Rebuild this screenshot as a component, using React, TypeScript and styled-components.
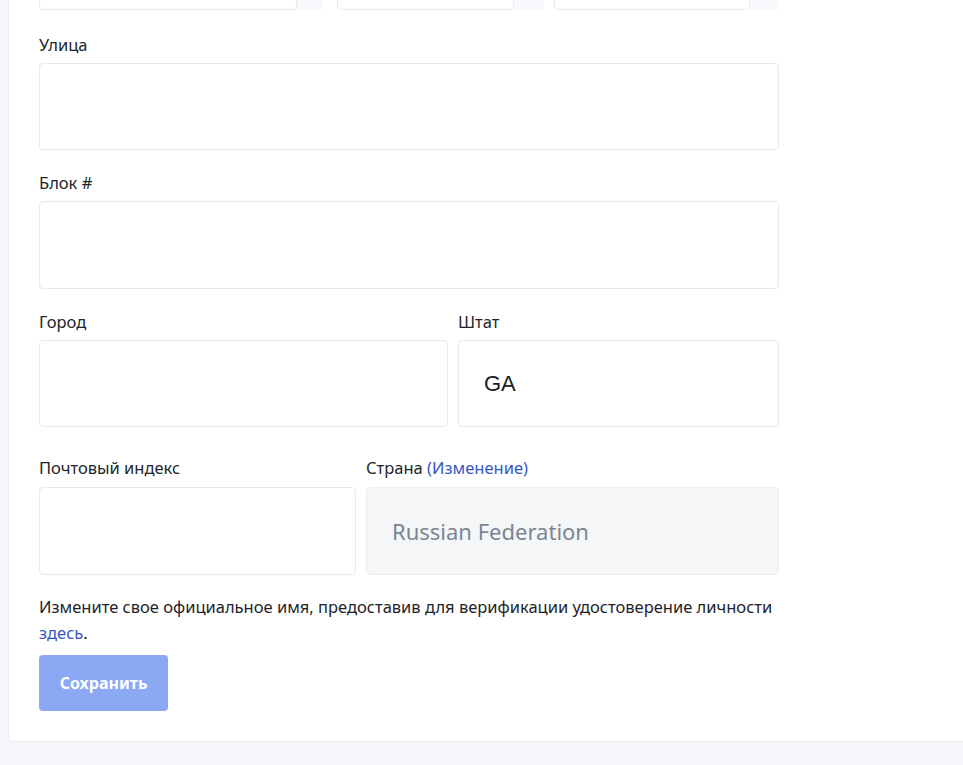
import React from "react";
import styled, { createGlobalStyle } from "styled-components";

const GlobalStyle = createGlobalStyle`
  html, body {
    margin: 0;
    padding: 0;
    background: #f4f6fb;
    overflow: hidden;
  }
  * { box-sizing: border-box; }
`;

const Page = styled.div`
  min-height: 765px;
  padding-left: 8px;
  font-family: "Noto Sans", "Open Sans", sans-serif;
  color: #1f2329;
`;

const Card = styled.div`
  background: #ffffff;
  border-left: 1px solid #e8ebf1;
  border-bottom: 1px solid #e8ebf1;
  border-radius: 0 0 0 6px;
  padding: 0 0 30px 30px;
  width: 970px;
`;

const Content = styled.div`
  width: 740px;
`;

const TopRow = styled.div`
  display: grid;
  grid-template-columns: 288px 207px 225px;
  gap: 10px;
  margin-top: -78px;
  height: 88px;
`;

const TopCell = styled.div`
  display: flex;
`;

const TopInput = styled.div<{ $w: number }>`
  width: ${(p) => p.$w}px;
  border: 1px solid #e6e9ee;
  border-radius: 4px;
  background: #fff;
`;

const TopAddon = styled.div<{ $w: number }>`
  width: ${(p) => p.$w}px;
  background: #f7f9fd;
`;

const Row = styled.div<{ $cols?: string; $top: number }>`
  display: grid;
  grid-template-columns: ${(p) => p.$cols ?? "1fr"};
  column-gap: 10px;
  margin-top: ${(p) => p.$top}px;
`;

const Field = styled.div`
  display: flex;
  flex-direction: column;
`;

const Label = styled.label<{ $gap?: number }>`
  font-size: 16.5px;
  line-height: 24px;
  color: #22262c;
  margin-bottom: ${(p) => p.$gap ?? 6}px;
`;

const ChangeLink = styled.a`
  color: #3557c2;
  text-decoration: none;
`;

const Box = styled.div<{ $h: number; $muted?: boolean }>`
  height: ${(p) => p.$h}px;
  border: 1px solid ${(p) => (p.$muted ? "#eceff2" : "#e6e9ee")};
  border-radius: 4px;
  background: ${(p) => (p.$muted ? "#f4f6f8" : "#ffffff")};
  display: flex;
  align-items: center;
  padding: 0 25px;
`;

const StateValue = styled.span`
  font-family: "Liberation Sans", Arial, sans-serif;
  font-size: 22px;
  color: #1b1e24;
`;

const CountryValue = styled.span`
  font-size: 22px;
  color: #7a8595;
`;

const Note = styled.p`
  margin: 19px 0 0;
  font-size: 16.5px;
  line-height: 26px;
  color: #1f2329;
`;

const NoteLink = styled.a`
  color: #3557c2;
  text-decoration: none;
`;

const SaveButton = styled.button`
  margin-top: 9px;
  width: 129px;
  height: 56px;
  border: none;
  border-radius: 4px;
  background: #8ba8f5;
  color: #ffffff;
  font-family: "Noto Sans", "Open Sans", sans-serif;
  font-weight: 700;
  font-size: 16px;
  cursor: not-allowed;
`;

export default function App() {
  return (
    <>
      <GlobalStyle />
      <Page>
        <Card>
          <Content>
            <TopRow>
              <TopCell>
                <TopInput $w={258} />
                <TopAddon $w={26} />
              </TopCell>
              <TopCell>
                <TopInput $w={177} />
                <TopAddon $w={30} />
              </TopCell>
              <TopCell>
                <TopInput $w={196} />
                <TopAddon $w={28} />
              </TopCell>
            </TopRow>

            <Row $top={23}>
              <Field>
                <Label>Улица</Label>
                <Box $h={87} />
              </Field>
            </Row>

            <Row $top={21}>
              <Field>
                <Label>Блок #</Label>
                <Box $h={88} />
              </Field>
            </Row>

            <Row $top={21} $cols="409px 321px">
              <Field>
                <Label>Город</Label>
                <Box $h={87} />
              </Field>
              <Field>
                <Label>Штат</Label>
                <Box $h={87}>
                  <StateValue>GA</StateValue>
                </Box>
              </Field>
            </Row>

            <Row $top={29} $cols="317px 413px">
              <Field>
                <Label $gap={7}>Почтовый индекс</Label>
                <Box $h={88} />
              </Field>
              <Field>
                <Label $gap={7}>
                  Страна <ChangeLink href="#">(Изменение)</ChangeLink>
                </Label>
                <Box $h={88} $muted>
                  <CountryValue>Russian Federation</CountryValue>
                </Box>
              </Field>
            </Row>

            <Note>
              Измените свое официальное имя, предоставив для верификации удостоверение личности{" "}
              <NoteLink href="#">здесь</NoteLink>.
            </Note>

            <SaveButton type="button">Сохранить</SaveButton>
          </Content>
        </Card>
      </Page>
    </>
  );
}
